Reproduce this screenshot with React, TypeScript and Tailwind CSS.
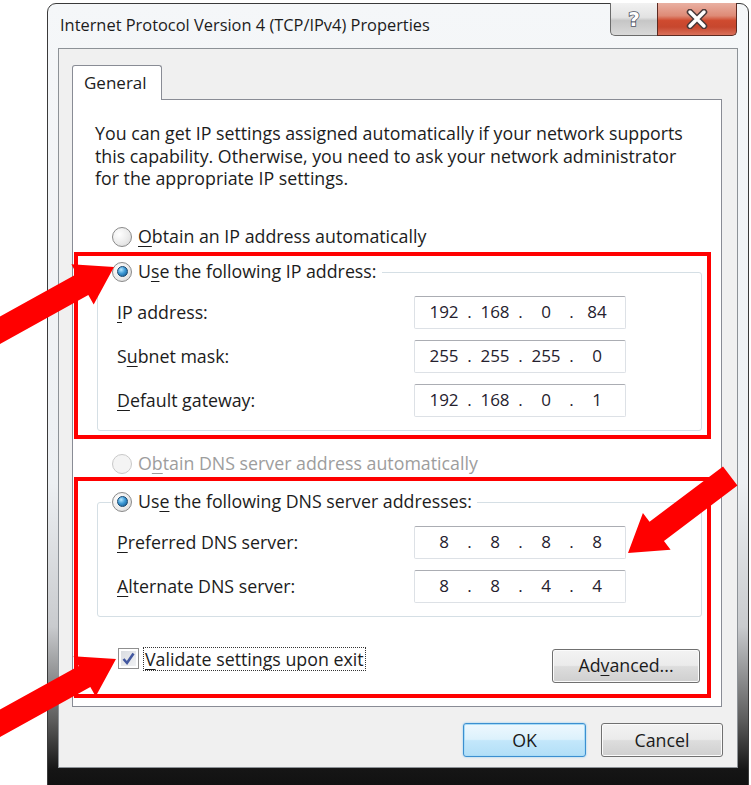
import { Fragment, type ReactNode } from "react";

// Windows 7 style "IPv4 Properties" dialog with red callouts drawn over it

function Key({ children }: { children: ReactNode }) {
  return <u className="underline underline-offset-[3px]">{children}</u>;
}

function Radio({ checked, disabled }: { checked?: boolean; disabled?: boolean }) {
  return (
    <span
      className={`flex h-[20px] w-[20px] shrink-0 items-center justify-center rounded-full border ${
        disabled
          ? "border-[#c9c9c9] bg-[#f4f4f4]"
          : "border-[#8a8a8a] bg-[radial-gradient(circle_at_35%_35%,#ffffff_0%,#e9e9e9_60%,#cfcfcf_100%)]"
      }`}
    >
      {checked && (
        <span className="h-[11px] w-[11px] rounded-full border border-[#16466e] bg-[radial-gradient(circle_at_35%_30%,#b8e8ff_0%,#3d9ad6_45%,#0f4f86_100%)]" />
      )}
    </span>
  );
}

function RadioOption({
  checked,
  disabled,
  children,
}: {
  checked?: boolean;
  disabled?: boolean;
  children: ReactNode;
}) {
  return (
    <div className="flex h-[24px] items-center gap-[6px]">
      <Radio checked={checked} disabled={disabled} />
      <span className={`whitespace-nowrap ${disabled ? "text-[#9d9d9d]" : ""}`}>{children}</span>
    </div>
  );
}

function IpField({ parts }: { parts: string[] }) {
  return (
    <div className="flex h-[33px] w-[212px] items-center rounded-[2px] border border-[#dde1e6] border-t-[#abadb3] bg-white pl-[10px] text-[17px] text-[#25212e]">
      {parts.map((p, i) => (
        <Fragment key={i}>
          {i > 0 && <span className="w-[13px] text-center">.</span>}
          <span className="w-[38px] text-center">{p}</span>
        </Fragment>
      ))}
    </div>
  );
}

function FieldRow({ label, parts }: { label: ReactNode; parts: string[] }) {
  return (
    <div className="flex items-center justify-between pl-[19px] pr-[75px]">
      <span className="whitespace-nowrap">{label}</span>
      <IpField parts={parts} />
    </div>
  );
}

function GroupBox({ header, children }: { header: ReactNode; children: ReactNode }) {
  return (
    <div className="ml-[24px] mr-[19px] rounded-[3px] border border-[#d5dfe5] pb-[13px]">
      <div className="-mt-[13px] ml-[13px] w-fit bg-white pl-[1px] pr-[5px]">{header}</div>
      <div className="mt-[12px] flex flex-col gap-[11px]">{children}</div>
    </div>
  );
}

function PushButton({ children, primary, w }: { children: ReactNode; primary?: boolean; w: string }) {
  return (
    <button
      className={`flex h-[34px] ${w} items-center justify-center rounded-[3px] border ${
        primary
          ? "border-[#3c8fd0] bg-[linear-gradient(180deg,#eef8fe_0%,#dcf1fc_48%,#c3e7fb_52%,#b2dff7_100%)] shadow-[inset_0_0_0_1px_#a9dcf7,0_0_2px_#7cc4f0]"
          : "border-[#707070] bg-[linear-gradient(180deg,#f3f3f3_0%,#ebebeb_48%,#dddddd_52%,#cfcfcf_100%)] shadow-[inset_0_0_0_1px_#fbfbfb]"
      } text-[#1b1b1b]`}
    >
      {children}
    </button>
  );
}

function CaptionButtons() {
  return (
    <div className="-mt-[1px] mr-[11px] flex h-[33px]">
      <div className="flex w-[47px] items-center justify-center rounded-bl-[5px] border border-r-0 border-t-0 border-[#6b6b6b] bg-[linear-gradient(180deg,#f2f2f2_0%,#e2e2e2_45%,#c6c6c6_55%,#d9d9d9_100%)]">
        <svg width="22" height="24" viewBox="0 0 22 24">
          <text
            x="11"
            y="19"
            textAnchor="middle"
            fontFamily="'DejaVu Sans', sans-serif"
            fontWeight="bold"
            fontSize="20"
            fill="#ffffff"
            stroke="#4e5463"
            strokeWidth="1.6"
            paintOrder="stroke"
          >
            ?
          </text>
        </svg>
      </div>
      <div className="flex w-[80px] items-center justify-center rounded-br-[5px] border border-t-0 border-[#5b2a22] bg-[linear-gradient(180deg,#e9b0a2_0%,#de8a76_40%,#cf4a2f_55%,#c7472e_75%,#d9705a_100%)]">
        <svg width="24" height="20" viewBox="0 0 24 20">
          <path d="M5 3 L19 17 M19 3 L5 17" stroke="#4a3a3a" strokeWidth="6.5" strokeLinecap="round" />
          <path d="M5 3 L19 17 M19 3 L5 17" stroke="#ffffff" strokeWidth="3.5" strokeLinecap="round" />
        </svg>
      </div>
    </div>
  );
}

function Arrow({ x, y, angle, length = 180 }: { x: number; y: number; angle: number; length?: number }) {
  // tip sits on the origin, body runs back along -x
  const pts = `0,0 -36,-23 -36,-12 ${-length},-12 ${-length},12 -36,12 -36,23`;
  return <polygon points={pts} fill="#ff0000" transform={`translate(${x} ${y}) rotate(${angle})`} />;
}

export default function App() {
  return (
    <div className="relative h-[785px] w-[751px] overflow-hidden bg-white font-['Open_Sans',sans-serif] text-[17.8px] leading-[22.5px] text-[#1c1c1c]">
      <div className="ml-[47px] mt-[3px] h-[800px] w-[702px] rounded-t-[9px] border border-[#3a3a3a] bg-[linear-gradient(180deg,#f5f7f9_0%,#edf0f3_60%,#c9cbce_78%,#5a5a5a_90%,#151515_96%,#0d0d0d_100%)]">
        {/* title bar */}
        <div className="flex h-[44px] items-start justify-between">
          <div className="whitespace-nowrap pl-[12px] pt-[10px] text-[16.4px]">
            Internet Protocol Version 4 (TCP/IPv4) Properties
          </div>
          <CaptionButtons />
        </div>

        {/* client area */}
        <div className="mx-[10px] h-[720px] border border-[#8d9297] bg-[#f0f0f0] pl-[13px] pr-[14px] pt-[16px]">
          <div className="relative z-10 flex h-[35px] w-[90px] items-center rounded-t-[3px] border border-b-0 border-[#898c95] bg-white pl-[11px] text-[17px]">
            General
          </div>
          <div className="-mt-[1px] h-[608px] w-[650px] border border-[#898c95] bg-white">
            <p className="whitespace-nowrap pl-[22px] pt-[22px]">
              You can get IP settings assigned automatically if your network supports
              <br />
              this capability. Otherwise, you need to ask your network administrator
              <br />
              for the appropriate IP settings.
            </p>

            <div className="ml-[39px] mt-[35px]">
              <RadioOption>
                <Key>O</Key>btain an IP address automatically
              </RadioOption>
            </div>

            <div className="mt-[23px]">
              <GroupBox
                header={
                  <RadioOption checked>
                    U<Key>s</Key>e the following IP address:
                  </RadioOption>
                }
              >
                <FieldRow label={<><Key>I</Key>P address:</>} parts={["192", "168", "0", "84"]} />
                <FieldRow label={<>S<Key>u</Key>bnet mask:</>} parts={["255", "255", "255", "0"]} />
                <FieldRow label={<><Key>D</Key>efault gateway:</>} parts={["192", "168", "0", "1"]} />
              </GroupBox>
            </div>

            <div className="ml-[39px] mt-[21px]">
              <RadioOption disabled>
                O<Key>b</Key>tain DNS server address automatically
              </RadioOption>
            </div>

            <div className="mt-[26px]">
              <GroupBox
                header={
                  <RadioOption checked>
                    Us<Key>e</Key> the following DNS server addresses:
                  </RadioOption>
                }
              >
                <FieldRow label={<><Key>P</Key>referred DNS server:</>} parts={["8", "8", "8", "8"]} />
                <FieldRow label={<><Key>A</Key>lternate DNS server:</>} parts={["8", "8", "4", "4"]} />
              </GroupBox>
            </div>

            <div className="mt-[30px] flex items-start justify-between pl-[45px] pr-[21px]">
              <div className="flex items-center gap-[4px]">
                <span className="flex h-[21px] w-[21px] items-center justify-center border border-[#8f8f8f] bg-[linear-gradient(135deg,#d6d9de_0%,#f4f5f7_100%)] shadow-[inset_0_0_0_2px_#ffffff]">
                  <svg width="15" height="15" viewBox="0 0 15 15">
                    <path d="M2.5 8 L6 12 L12.5 2.5" fill="none" stroke="#4358a0" strokeWidth="2.6" />
                  </svg>
                </span>
                <span className="whitespace-nowrap border border-dotted border-[#333] px-[1px]">
                  <Key>V</Key>alidate settings upon exit
                </span>
              </div>
              <div className="mt-[2px]">
                <PushButton w="w-[148px]">
                  Ad<Key>v</Key>anced...
                </PushButton>
              </div>
            </div>
          </div>

          <div className="mt-[16px] flex justify-end gap-[15px]">
            <PushButton primary w="w-[123px]">
              OK
            </PushButton>
            <PushButton w="w-[122px]">Cancel</PushButton>
          </div>
        </div>
      </div>

      {/* callouts */}
      <div className="pointer-events-none absolute left-[74px] top-[252px] h-[187px] w-[637px] border-4 border-[#ff0000]" />
      <div className="pointer-events-none absolute left-[74px] top-[477px] h-[221px] w-[637px] border-4 border-[#ff0000]" />
      <svg className="pointer-events-none absolute left-0 top-0" width="751" height="785">
        <Arrow x={114} y={267} angle={-29} />
        <Arrow x={628} y={553} angle={143} length={128} />
        <Arrow x={116} y={659} angle={-29} />
      </svg>
    </div>
  );
}
